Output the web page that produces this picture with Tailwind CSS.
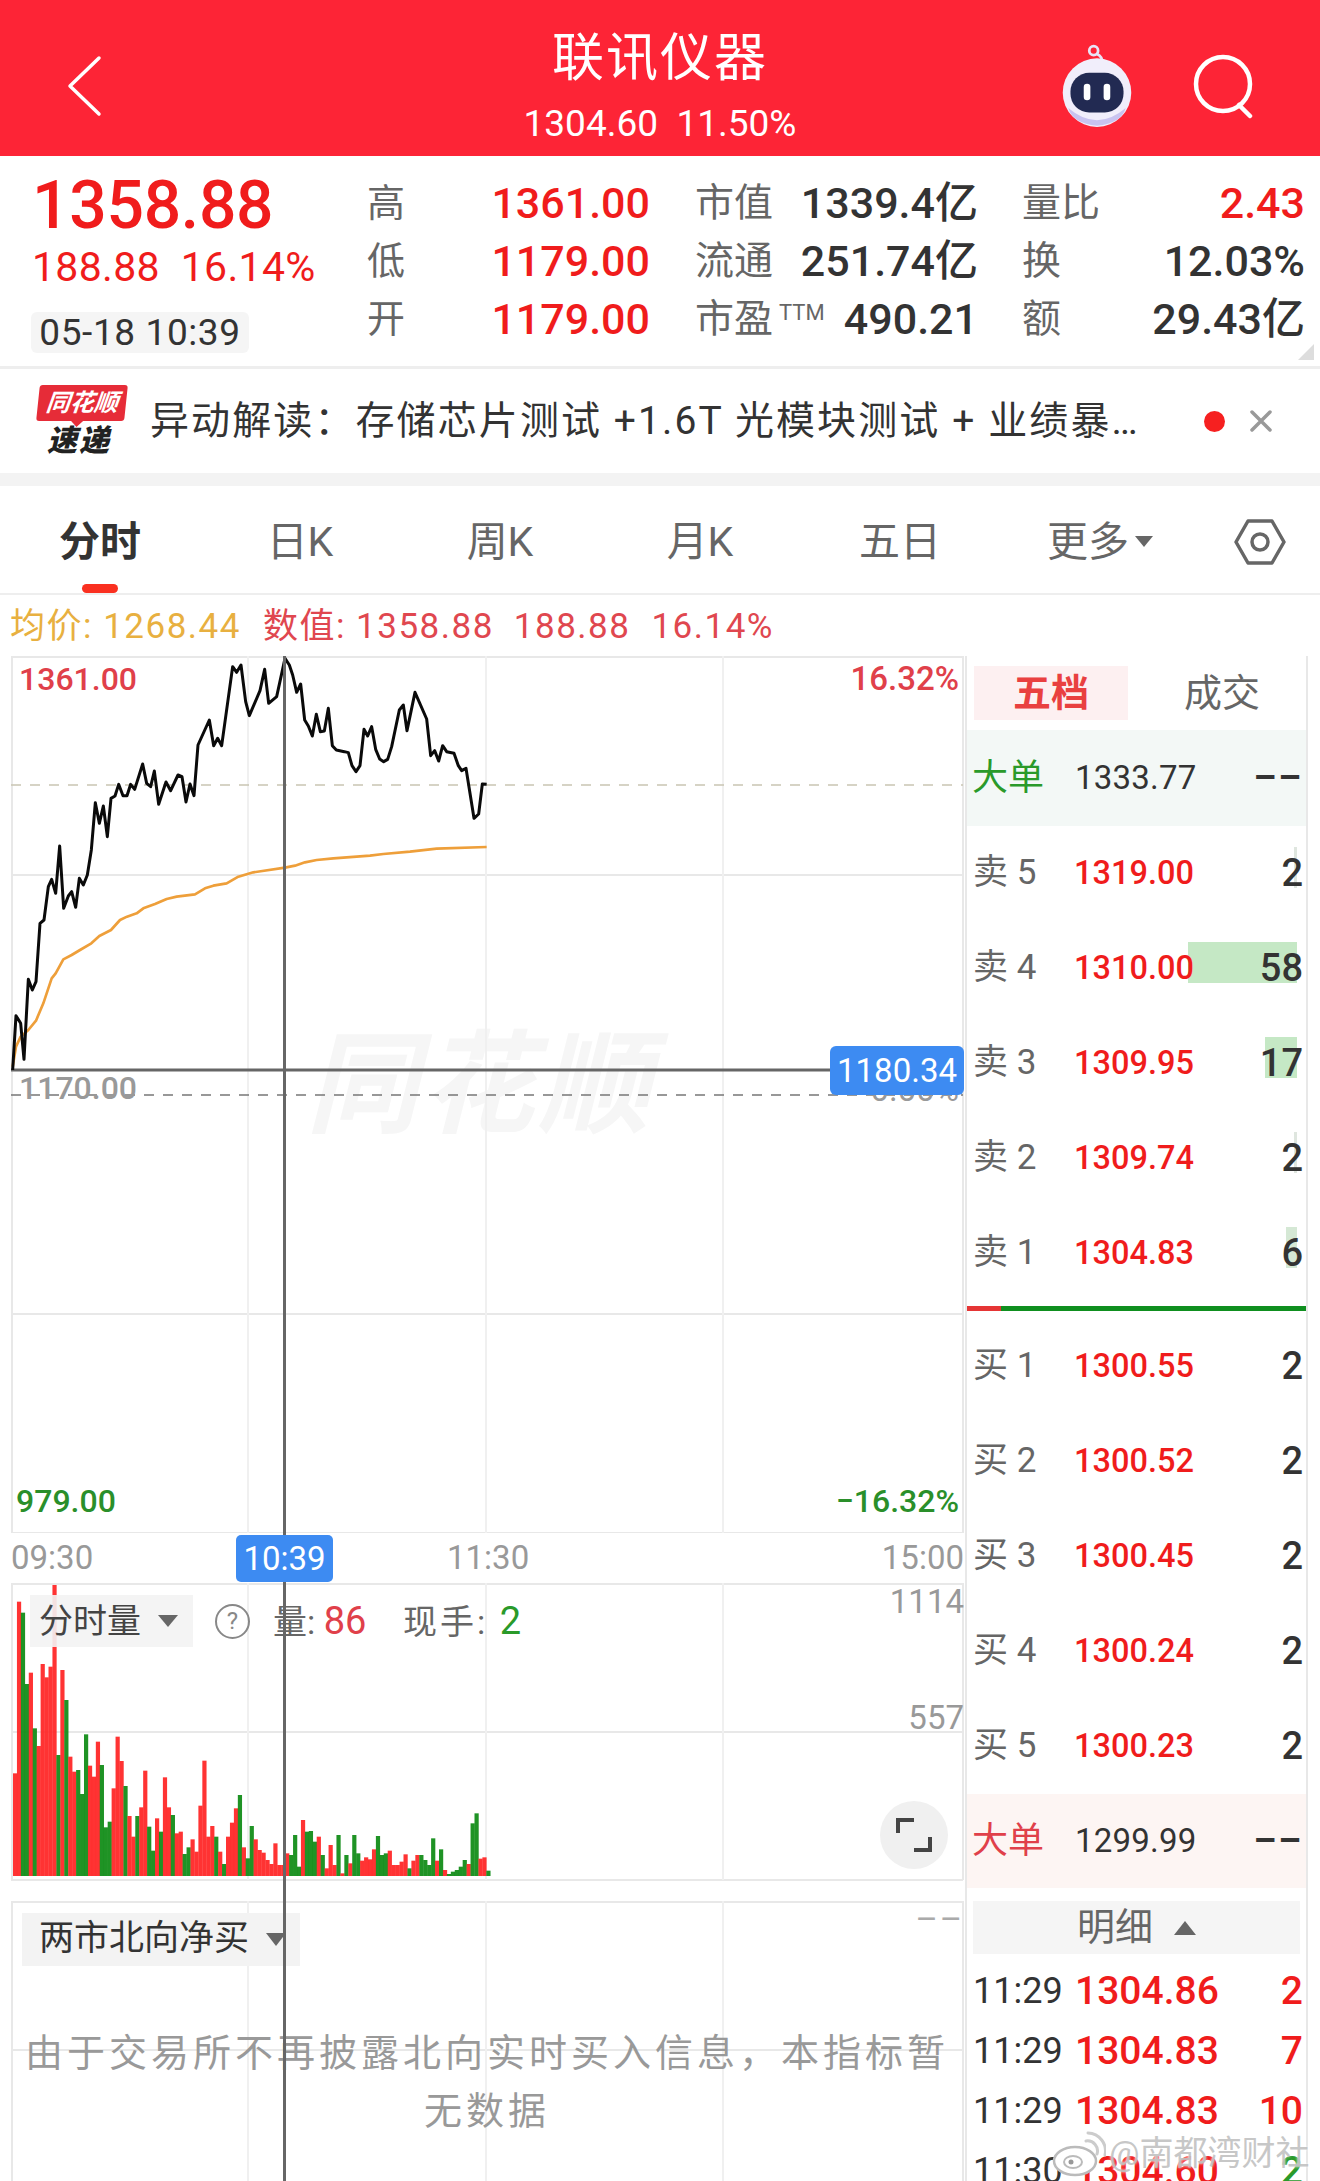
<!DOCTYPE html>
<html lang="zh-CN">
<head>
  <meta charset="UTF-8">
  <meta name="viewport" content="width=device-width, initial-scale=1.0">
  <title>联讯仪器</title>
  <script src="https://cdn.jsdelivr.net/npm/@tailwindcss/browser@4"></script>
</head>
<body class="bg-white font-['Roboto','Noto_Sans_CJK_SC',sans-serif]">
<div class="relative w-[1320px] h-[2181px] overflow-hidden bg-white text-[#333]">

  <!-- Header -->
  <header class="h-[156px] pt-[16px] bg-[#fd2436] text-white grid grid-cols-[1fr_auto_1fr] items-center">
    <div class="pl-[66px]">
      <svg width="36" height="62" viewBox="0 0 36 62" fill="none" stroke="#fff" stroke-width="3.5" stroke-linecap="round" stroke-linejoin="round"><path d="M33 3 L4 31 L33 59"/></svg>
    </div>
    <div class="flex flex-col items-center pt-[5px]">
      <div class="text-[52px] leading-[62px] tracking-[2px] mt-[-4px]">联讯仪器</div>
      <div class="text-[37px] leading-[42px] mt-[13px]">1304.60&nbsp;&nbsp;11.50%</div>
    </div>
    <div class="flex justify-end items-center pr-[64px] gap-[53px]">
      <svg width="84" height="84" viewBox="0 0 76 76">
        <circle cx="35" cy="6" r="4" fill="none" stroke="#e8e4f6" stroke-width="2.5"/>
        <path d="M38 9 q5 2 5 9" fill="none" stroke="#e8e4f6" stroke-width="2.5"/>
        <circle cx="38" cy="44" r="31" fill="#f1eefb"/>
        <path d="M12 58 q26 22 52 0 q-4 14 -26 16 q-22 -2 -26 -16z" fill="#c9c3f0"/>
        <rect x="14" y="26" width="48" height="36" rx="17" fill="#222a52"/>
        <rect x="26" y="36" width="6" height="15" rx="3" fill="#fff"/>
        <rect x="44" y="36" width="6" height="15" rx="3" fill="#fff"/>
      </svg>
      <svg width="64" height="66" viewBox="0 0 64 66" fill="none" stroke="#fff" stroke-width="4.5" stroke-linecap="round"><circle cx="31" cy="31" r="27"/><path d="M47 52 L58 63"/></svg>
    </div>
  </header>

  <!-- Quote -->
  <section class="h-[213px] border-b-[3px] border-[#eeeeee] flex pt-[18px]">
    <div class="w-[367px] pl-[32px]">
      <div class="text-[66px] leading-[68px] font-medium tracking-[-.3px] text-[#f01c1c] mt-[-2px]">1358.88</div>
      <div class="text-[41px] leading-[46px] text-[#f01c1c] mt-[4px] whitespace-nowrap tracking-[.3px]">188.88&nbsp;&nbsp;16.14%</div>
      <div class="mt-[22px] ml-[-1px] w-[218px] h-[41px] rounded-[6px] bg-[#f5f5f5] flex items-center justify-center text-[37px] tracking-[.6px] whitespace-nowrap">05-18 10:39</div>
    </div>
    <div class="w-[283px] flex flex-col">
      <div class="h-[58px] flex justify-between items-center"><span class="text-[38px] text-[#666]">高</span><span class="text-[43px] font-medium text-[#f01c1c]">1361.00</span></div>
      <div class="h-[58px] flex justify-between items-center"><span class="text-[38px] text-[#666]">低</span><span class="text-[43px] font-medium text-[#f01c1c]">1179.00</span></div>
      <div class="h-[58px] flex justify-between items-center"><span class="text-[38px] text-[#666]">开</span><span class="text-[43px] font-medium text-[#f01c1c]">1179.00</span></div>
    </div>
    <div class="w-[283px] ml-[45px] flex flex-col">
      <div class="h-[58px] flex justify-between items-center"><span class="text-[39px] text-[#666]">市值</span><span class="text-[43px] font-medium">1339.4亿</span></div>
      <div class="h-[58px] flex justify-between items-center"><span class="text-[39px] text-[#666]">流通</span><span class="text-[43px] font-medium">251.74亿</span></div>
      <div class="h-[58px] flex justify-between items-center"><span class="text-[39px] text-[#666] whitespace-nowrap">市盈<sup class="text-[22px] ml-[6px] top-[-12px]">TTM</sup></span><span class="text-[43px] font-medium">490.21</span></div>
    </div>
    <div class="relative w-[283px] ml-[44px] flex flex-col">
      <div class="h-[58px] flex justify-between items-center"><span class="text-[39px] text-[#666]">量比</span><span class="text-[43px] font-medium text-[#f01c1c]">2.43</span></div>
      <div class="h-[58px] flex justify-between items-center"><span class="text-[39px] text-[#666]">换</span><span class="text-[43px] font-medium">12.03%</span></div>
      <div class="h-[58px] flex justify-between items-center"><span class="text-[39px] text-[#666]">额</span><span class="text-[43px] font-medium">29.43亿</span></div>
      <div class="absolute right-[-9px] top-[170px] w-0 h-0 border-l-[16px] border-l-transparent border-b-[16px] border-b-[#dddddd]"></div>
    </div>
  </section>

  <!-- Alert -->
  <section class="h-[104px] flex items-center">
    <div class="ml-[37px] w-[90px] flex flex-col items-center">
      <div class="relative w-[88px] h-[36px] bg-[#e62c38] rounded-[3px] -skew-x-6 text-white text-[24px] leading-[36px] font-bold italic text-center whitespace-nowrap">同花顺
        <div class="absolute left-[34px] bottom-[-6px] w-0 h-0 border-x-[7px] border-x-transparent border-t-[7px] border-t-[#e62c38]"></div>
      </div>
      <div class="text-[30px] leading-[34px] font-black italic text-[#222] tracking-[2px] mt-[3px] ml-[-6px]">速递</div>
    </div>
    <div class="ml-[23px] w-[1040px] text-[39px] text-[#333] tracking-[2.1px] whitespace-nowrap">异动解读：存储芯片测试 +1.6T 光模块测试 + 业绩暴…</div>
    <div class="ml-[14px] w-[21px] h-[21px] rounded-full bg-[#f62020]"></div>
    <svg class="ml-[24px]" width="24" height="24" viewBox="0 0 24 24" stroke="#999" stroke-width="3.5" stroke-linecap="round"><path d="M3 3 L21 21 M21 3 L3 21"/></svg>
  </section>
  <div class="h-[13px] bg-[#f3f3f3]"></div>

  <!-- Tabs -->
  <nav class="h-[109px] pt-[4px] border-b-2 border-[#eeeeee] grid grid-cols-[200px_200px_200px_200px_200px_200px_120px] items-center text-center text-[41px] leading-[60px] text-[#666]">
    <div class="relative font-bold text-[#333]">分时
      <div class="absolute left-[82px] top-[72px] w-[36px] h-[9px] rounded-full bg-[#fa3020]"></div>
    </div>
    <div>日K</div>
    <div>周K</div>
    <div>月K</div>
    <div>五日</div>
    <div class="flex items-center justify-center gap-[6px]">更多<span class="w-0 h-0 border-x-[9px] border-x-transparent border-t-[11px] border-t-[#666]"></span></div>
    <div class="flex justify-center">
      <svg width="52" height="48" viewBox="0 0 52 48" fill="none" stroke="#666" stroke-width="3.5" stroke-linejoin="round"><path d="M14 3 H38 L50 24 L38 45 H14 L2 24 Z"/><circle cx="26" cy="24" r="8"/></svg>
    </div>
  </nav>

  <main class="flex">
    <!-- Left charts -->
    <div class="relative w-[965px] pl-[11px]">
      <div class="h-[61px] flex items-center text-[35px] tracking-[1.5px] whitespace-nowrap pt-[3px] ml-[-1px]">
        <span class="text-[#e8b040]">均价: 1268.44</span>
        <span class="ml-[22px] text-[#e0474f]">数值: 1358.88</span>
        <span class="ml-[20px] text-[#e0474f]">188.88</span>
        <span class="ml-[21px] text-[#e0474f]">16.14%</span>
      </div>

      <!-- Price chart -->
      <div class="relative w-[953px] h-[877px]">
        <div class="absolute left-[295px] top-[370px] text-[112px] leading-[120px] font-bold italic text-[#f6f6f6] tracking-[4px]">同花顺</div>
        <svg class="absolute inset-0" width="953" height="877" viewBox="11 656 953 877" fill="none">
          <g stroke-width="2">
            <path stroke="#e8e8e8" d="M11 657 H963 M11 875 H963 M11 1314 H963 M11 1533 H963 M12 656 V1533 M963 656 V1533"/>
            <path stroke="#f0f0f0" d="M248 656 V1533 M486 656 V1533 M723 656 V1533"/>
          </g>
          <path d="M11 785 H963" stroke="#c9c5b2" stroke-width="1.5" stroke-dasharray="10 9"/>
          <path d="M11 1095 H963" stroke="#777" stroke-width="1.5" stroke-dasharray="10 9"/>
          <path d="M11 1070 H840" stroke="#666" stroke-width="3"/>
          <g transform="translate(0,600) scale(.33333)" stroke-linejoin="round">
            <polyline stroke="#ee9f3a" stroke-width="8" points="38,1400 48,1340 62,1310 85,1290 108,1262 130,1210 155,1135 167,1120 190,1078 215,1065 240,1050 274,1030 298,1008 333,990 360,960 381,950 410,940 430,925 465,912 500,897 530,890 585,883 615,865 640,857 680,850 715,830 760,817 855,803 885,797 915,787 950,780 1000,775 1110,767 1150,762 1230,755 1310,746 1460,741"/>
            <polyline stroke="#0a0a0a" stroke-width="9" points="38,1410 48,1247 62,1270 72,1378 85,1138 97,1170 108,1145 120,970 132,960 145,860 155,838 167,880 179,738 191,925 205,888 215,875 227,922 238,835 250,855 262,825 274,750 286,608 298,670 310,618 322,710 333,595 345,588 356,553 369,587 381,587 392,553 404,568 428,492 440,550 452,560 463,513 476,613 498,546 512,572 534,525 546,530 558,606 570,552 582,587 594,435 628,360 641,437 653,415 665,437 698,200 710,217 723,195 737,305 748,347 780,272 794,208 806,310 830,290 855,175 868,195 878,225 890,277 902,252 914,360 925,378 937,408 949,343 961,395 973,393 985,325 997,437 1009,450 1033,455 1045,458 1056,497 1068,515 1080,497 1092,388 1103,408 1115,380 1127,448 1139,477 1151,485 1163,478 1175,440 1198,330 1210,315 1221,392 1245,277 1280,357 1292,467 1304,452 1316,483 1328,437 1340,455 1362,460 1375,497 1385,512 1398,505 1422,655 1436,642 1447,552 1460,553"/>
          </g>
        </svg>
        <span class="absolute left-[8px] top-[3px] text-[32px] font-medium leading-[40px] text-[#e0404a]">1361.00</span>
        <span class="absolute right-[5px] top-[3px] text-[33px] font-medium leading-[40px] text-[#e0404a]">16.32%</span>
        <span class="absolute left-[8px] top-[412px] text-[32px] font-medium leading-[40px] text-[#999]">1170.00</span>
        <span class="absolute right-[5px] top-[414px] text-[33px] leading-[40px] text-[#999]">0.00%</span>
        <span class="absolute right-[0px] top-[390px] w-[134px] h-[49px] rounded-[6px] bg-[#3d8bf2] text-white text-[33px] leading-[49px] text-center">1180.34</span>
        <span class="absolute left-[5px] bottom-[12px] text-[32px] font-medium leading-[40px] text-[#2a8f2a]">979.00</span>
        <span class="absolute right-[5px] bottom-[12px] text-[32px] font-medium leading-[40px] text-[#2a8f2a]">−16.32%</span>
      </div>

      <!-- Time axis -->
      <div class="relative w-[953px] h-[50px] flex items-center justify-between text-[33px] text-[#999]">
        <span>09:30</span>
        <span class="absolute z-10 left-[225px] top-[2px] w-[97px] h-[47px] rounded-[5px] bg-[#3d8bf2] text-white text-center leading-[47px]">10:39</span>
        <span class="absolute left-[436px]">11:30</span>
        <span>15:00</span>
      </div>

      <!-- Volume chart -->
      <div class="relative w-[953px] h-[298px]">
        <svg id="volume" class="absolute inset-0" width="953" height="298" viewBox="11 1583 953 298" fill="none">
          <g stroke-width="2">
            <path stroke="#e8e8e8" d="M11 1584 H963 M11 1732 H963 M11 1880 H963 M12 1583 V1880 M963 1583 V1880"/>
            <path stroke="#f0f0f0" d="M248 1583 V1880 M486 1583 V1880 M723 1583 V1880"/>
          </g>
        </svg>
        <div class="absolute left-[19px] top-[12px] w-[163px] h-[52px] bg-[#f3f3f3]/90 flex items-center pl-[9px] text-[34px] text-[#444]">分时量<span class="ml-[17px] w-0 h-0 border-x-[10px] border-x-transparent border-t-[12px] border-t-[#666]"></span></div>
        <div class="absolute left-[204px] top-[21px] w-[35px] h-[35px] rounded-full border-2 border-[#888] text-[24px] leading-[31px] text-center text-[#888]">?</div>
        <div class="absolute left-[262px] top-[16px] text-[34px] leading-[44px] whitespace-nowrap text-[#666]">量: <span class="text-[38px] text-[#e0404a]">86</span></div>
        <div class="absolute left-[392px] top-[16px] text-[34px] tracking-[3px] leading-[44px] whitespace-nowrap text-[#666]">现手: <span class="text-[38px] text-[#2a9a2a]">2</span></div>
        <span class="absolute right-[0px] top-[-1px] text-[33px] leading-[40px] text-[#999]">1114</span>
        <span class="absolute right-[0px] top-[115px] text-[33px] leading-[40px] text-[#999]">557</span>
        <div class="absolute left-[869px] top-[218px] w-[68px] h-[68px] rounded-full bg-[#f0f0f0] flex items-center justify-center">
          <svg width="36" height="36" viewBox="0 0 36 36" fill="none" stroke="#444" stroke-width="4"><path d="M2 16 V3 H18 M34 20 V33 H18"/></svg>
        </div>
      </div>

      <!-- Northbound -->
      <div class="relative w-[953px] h-[280px] mt-[20px]">
        <svg class="absolute inset-0" width="953" height="280" viewBox="11 1901 953 280" fill="none">
          <g stroke-width="2">
            <path stroke="#e8e8e8" d="M11 1902 H963 M11 2050 H963 M12 1901 V2181 M963 1901 V2181"/>
            <path stroke="#f0f0f0" d="M248 1901 V2181 M486 1901 V2181 M723 1901 V2181"/>
          </g>
        </svg>
        <div class="absolute left-[11px] top-[12px] w-[278px] h-[53px] bg-[#f3f3f3] flex items-center pl-[17px] text-[35px] text-[#333] whitespace-nowrap">两市北向净买<span class="ml-[17px] w-0 h-0 border-x-[10px] border-x-transparent border-t-[13px] border-t-[#666]"></span></div>
        <span class="absolute right-[0px] top-[-2px] text-[34px] leading-[40px] text-[#aaa] tracking-[2px]">––</span>
        <div class="absolute left-[6px] top-[123px] w-[940px] text-center text-[38px] leading-[58px] tracking-[4px] text-[#999]">由于交易所不再披露北向实时买入信息，本指标暂<br>无数据</div>
      </div>

      <!-- Crosshair -->
      <div class="absolute left-[283px] top-[61px] bottom-[-400px] w-[3px] bg-[#666]"></div>
    </div>

    <!-- Order book -->
    <aside class="w-[343px] mt-[61px] border-x-2 border-[#e8e8e8] h-[1525px] overflow-hidden">
      <div class="h-[74px] pt-[10px] flex text-[38px]">
        <div class="ml-[7px] w-[154px] h-[54px] bg-[#fdf0f1] text-[#e94040] font-bold flex items-center justify-center">五档</div>
        <div class="flex-1 h-[54px] pl-[10px] text-[#666] flex items-center justify-center">成交</div>
      </div>
      <div class="h-[96px] bg-[#f3f8f6] flex items-center pl-[5px] pr-[3px]">
        <span class="w-[103px] text-[36px] text-[#2a9a2a]">大单</span>
        <span class="text-[33px] tracking-[.2px] text-[#333]">1333.77</span>
        <span class="ml-auto text-[36px] font-bold tracking-[2px] text-[#333]">––</span>
      </div>
      <div class="h-[95px] flex items-center pl-[6px] pr-[3px] text-[#666]"><span class="w-[101px] text-[35px]">卖 5</span><span class="text-[32.5px] font-medium text-[#f01c1c]">1319.00</span><span class="relative ml-auto text-[38px] font-medium text-[#333]"><i class="absolute right-[6px] top-[2px] w-[3px] h-[41px] bg-[#dfe6df]"></i><b class="relative font-medium">2</b></span></div>
      <div class="h-[95px] flex items-center pl-[6px] pr-[3px] text-[#666]"><span class="w-[101px] text-[35px]">卖 4</span><span class="relative z-10 text-[32.5px] font-medium text-[#f01c1c]">1310.00</span><span class="relative ml-auto text-[38px] font-medium text-[#333]"><i class="absolute right-[6px] top-[2px] w-[109px] h-[41px] bg-[#c5e8c5]"></i><b class="relative font-medium">58</b></span></div>
      <div class="h-[95px] flex items-center pl-[6px] pr-[3px] text-[#666]"><span class="w-[101px] text-[35px]">卖 3</span><span class="text-[32.5px] font-medium text-[#f01c1c]">1309.95</span><span class="relative ml-auto text-[38px] font-medium text-[#333]"><i class="absolute right-[6px] top-[2px] w-[32px] h-[41px] bg-[#c5e8c5]"></i><b class="relative font-medium">17</b></span></div>
      <div class="h-[95px] flex items-center pl-[6px] pr-[3px] text-[#666]"><span class="w-[101px] text-[35px]">卖 2</span><span class="text-[32.5px] font-medium text-[#f01c1c]">1309.74</span><span class="relative ml-auto text-[38px] font-medium text-[#333]"><i class="absolute right-[6px] top-[2px] w-[3px] h-[41px] bg-[#dfe6df]"></i><b class="relative font-medium">2</b></span></div>
      <div class="h-[95px] flex items-center pl-[6px] pr-[3px] text-[#666]"><span class="w-[101px] text-[35px]">卖 1</span><span class="text-[32.5px] font-medium text-[#f01c1c]">1304.83</span><span class="relative ml-auto text-[38px] font-medium text-[#333]"><i class="absolute right-[6px] top-[2px] w-[11px] h-[41px] bg-[#d5e8d5]"></i><b class="relative font-medium">6</b></span></div>
      <div class="flex h-[5px] mt-[5px]"><div class="w-[34px] bg-[#e53535]"></div><div class="flex-1 bg-[#0f8f1f]"></div></div>
      <div class="h-[8px]"></div>
      <div class="h-[95px] flex items-center pl-[6px] pr-[3px] text-[#666]"><span class="w-[101px] text-[35px]">买 1</span><span class="text-[32.5px] font-medium text-[#f01c1c]">1300.55</span><span class="ml-auto text-[38px] font-medium text-[#333]">2</span></div>
      <div class="h-[95px] flex items-center pl-[6px] pr-[3px] text-[#666]"><span class="w-[101px] text-[35px]">买 2</span><span class="text-[32.5px] font-medium text-[#f01c1c]">1300.52</span><span class="ml-auto text-[38px] font-medium text-[#333]">2</span></div>
      <div class="h-[95px] flex items-center pl-[6px] pr-[3px] text-[#666]"><span class="w-[101px] text-[35px]">买 3</span><span class="text-[32.5px] font-medium text-[#f01c1c]">1300.45</span><span class="ml-auto text-[38px] font-medium text-[#333]">2</span></div>
      <div class="h-[95px] flex items-center pl-[6px] pr-[3px] text-[#666]"><span class="w-[101px] text-[35px]">买 4</span><span class="text-[32.5px] font-medium text-[#f01c1c]">1300.24</span><span class="ml-auto text-[38px] font-medium text-[#333]">2</span></div>
      <div class="h-[95px] flex items-center pl-[6px] pr-[3px] text-[#666]"><span class="w-[101px] text-[35px]">买 5</span><span class="text-[32.5px] font-medium text-[#f01c1c]">1300.23</span><span class="ml-auto text-[38px] font-medium text-[#333]">2</span></div>
      <div class="h-[94px] bg-[#fdf5f3] flex items-center pl-[5px] pr-[3px]">
        <span class="w-[103px] text-[36px] text-[#e0404a]">大单</span>
        <span class="text-[33px] tracking-[.2px] text-[#333]">1299.99</span>
        <span class="ml-auto text-[36px] font-bold tracking-[2px] text-[#333]">––</span>
      </div>
      <div class="mt-[13px] mx-[6px] h-[53px] bg-[#f5f5f5] text-[#666] text-[38px] flex items-center justify-center gap-[21px]">明细<span class="w-0 h-0 border-x-[11px] border-x-transparent border-b-[14px] border-b-[#666]"></span></div>
      <div class="h-[7px]"></div>
      <div class="h-[60px] flex items-center pl-[6px] pr-[3px] text-[39px] font-medium"><span class="w-[102px] text-[36px] font-normal">11:29</span><span class="text-[#f01c1c]">1304.86</span><span class="ml-auto text-[#f01c1c]">2</span></div>
      <div class="h-[60px] flex items-center pl-[6px] pr-[3px] text-[39px] font-medium"><span class="w-[102px] text-[36px] font-normal">11:29</span><span class="text-[#f01c1c]">1304.83</span><span class="ml-auto text-[#f01c1c]">7</span></div>
      <div class="h-[60px] flex items-center pl-[6px] pr-[3px] text-[39px] font-medium"><span class="w-[102px] text-[36px] font-normal">11:29</span><span class="text-[#f01c1c]">1304.83</span><span class="ml-auto text-[#f01c1c]">10</span></div>
      <div class="h-[60px] flex items-center pl-[6px] pr-[3px] text-[39px] font-medium"><span class="w-[102px] text-[36px] font-normal">11:30</span><span class="text-[#f01c1c]">1304.60</span><span class="ml-auto text-[#2a9a2a]">2</span></div>
    </aside>
  </main>

  <!-- Weibo watermark -->
  <div class="absolute left-[1052px] top-[2128px] flex items-center">
    <svg width="54" height="46" viewBox="0 0 54 46" fill="none">
      <ellipse cx="23" cy="30" rx="21" ry="14" fill="#fff" stroke="#bbb" stroke-width="2.5"/>
      <ellipse cx="21" cy="31" rx="9" ry="6" fill="none" stroke="#bbb" stroke-width="2"/>
      <circle cx="19" cy="31" r="2.5" fill="#999"/>
      <path d="M34 10 a10 10 0 0 1 11 13 M36 2 a18 18 0 0 1 17 22" stroke="#ccc" stroke-width="3" stroke-linecap="round"/>
    </svg>
    <span class="ml-[3px] text-[34px] text-[#bdbdbd]/85 whitespace-nowrap [text-shadow:0_0_3px_#fff]">@南都湾财社</span>
  </div>
</div>

<script>
  // volume bars, tops traced off the chart: positive is red, negative is green
  const tops = [760,245,-278,-492,458,-625,678,432,472,440,195,-705,450,-540,710,755,-750,-822,-643,737,770,665,-735,-922,-905,805,650,723,-798,888,950,-888,862,752,-920,-992,895,-935,772,862,-885,940,935,-1002,-982,958,995,857,722,950,918,-950,995,-1032,950,908,865,-825,982,-1015,-918,958,990,998,1020,1032,970,1035,1035,1000,-1005,-945,-1040,900,-935,-933,-965,950,-1005,1045,975,1035,-945,1060,-1005,1030,-945,-1000,1022,1012,1018,988,-948,-1005,-1000,992,1035,1035,1025,1003,-1045,1022,1005,-1005,-1020,-1035,-955,1022,-988,1050,-1062,-1055,-1050,-1040,-1020,1032,-910,-880,1016,1012,-1052];
  const svg = document.getElementById('volume');
  const step = (1460 - 40) / (tops.length - 1) / 3;
  tops.forEach((t, i) => {
    const y = 1520 + Math.abs(t) / 3;
    const r = document.createElementNS('http://www.w3.org/2000/svg', 'rect');
    r.setAttribute('x', 13 + i * step);
    r.setAttribute('y', y);
    r.setAttribute('width', 4.2);
    r.setAttribute('height', 1876 - y);
    r.setAttribute('fill', t > 0 ? '#ff2222' : '#0c8a12');
    r.setAttribute('fill-opacity', '.92');
    svg.appendChild(r);
  });
</script>
</body>
</html>
